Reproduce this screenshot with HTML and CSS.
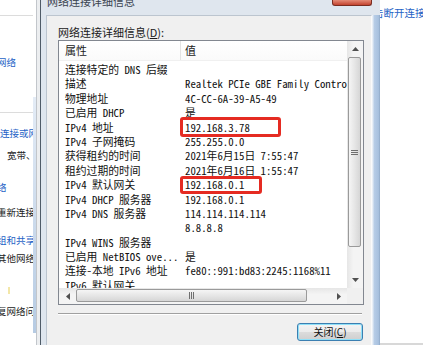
FILE: index.html
```html
<!DOCTYPE html>
<html lang="zh-CN">
<head>
  <meta charset="UTF-8" />
  <title>网络连接详细信息</title>
  <link rel="stylesheet" href="styles.css">
</head>
<body>
<div class="screen">

  <!-- window behind, left side -->
  <div class="bg-left">
    <div class="bg-text">
      <div class="rule rule-1"></div>
      <div class="ln link ln-net">网络</div>
      <div class="rule rule-2"></div>
      <div class="ln link ln-a">连接或网络</div>
      <div class="ln ln-b">宽带、</div>
      <div class="ln link ln-c">络</div>
      <div class="ln ln-d">重新连接</div>
      <div class="ln link ln-e">组和共享</div>
      <div class="ln ln-f">其他网络</div>
      <div class="spark"></div>
      <div class="ln ln-g">复网络问</div>
    </div>
    <div class="bg-bar"></div>
    <div class="bg-edge"></div>
  </div>

  <!-- the dialog -->
  <div class="dialog">
    <div class="titlebar">
      <span class="title">网络连接详细信息</span>
      <span class="close-btn"></span>
    </div>
    <div class="dlg-body">
      <div class="frame-l"></div>
      <div class="client">
        <div class="label">网络连接详细信息(<u>D</u>):</div>

        <div class="listview">
          <div class="lv-content">
            <div class="lv-head">
              <div class="h-k">属性</div>
              <div class="h-v">值</div>
            </div>
            <div class="rows">
              <div class="row"><div class="k">连接特定的 DNS 后缀</div><div class="v"></div></div>
              <div class="row"><div class="k">描述</div><div class="v">Realtek PCIe GBE Family Controller</div></div>
              <div class="row"><div class="k">物理地址</div><div class="v">4C-CC-6A-39-A5-49</div></div>
              <div class="row"><div class="k">已启用 DHCP</div><div class="v">是</div></div>
              <div class="row"><div class="k">IPv4 地址</div><div class="v">192.168.3.78<span class="mark mark-ip"></span></div></div>
              <div class="row"><div class="k">IPv4 子网掩码</div><div class="v">255.255.0.0</div></div>
              <div class="row"><div class="k">获得租约的时间</div><div class="v">2021年6月15日 7:55:47</div></div>
              <div class="row"><div class="k">租约过期的时间</div><div class="v">2021年6月16日 1:55:47</div></div>
              <div class="row"><div class="k">IPv4 默认网关</div><div class="v">192.168.0.1<span class="mark mark-gw"></span></div></div>
              <div class="row"><div class="k">IPv4 DHCP 服务器</div><div class="v">192.168.0.1</div></div>
              <div class="row"><div class="k">IPv4 DNS 服务器</div><div class="v">114.114.114.114</div></div>
              <div class="row"><div class="k"></div><div class="v">8.8.8.8</div></div>
              <div class="row"><div class="k">IPv4 WINS 服务器</div><div class="v"></div></div>
              <div class="row"><div class="k">已启用 NetBIOS ove...</div><div class="v">是</div></div>
              <div class="row"><div class="k">连接-本地 IPv6 地址</div><div class="v">fe80::991:bd83:2245:1168%11</div></div>
              <div class="row"><div class="k">IPv6 默认网关</div><div class="v"></div></div>
            </div>
          </div>

          <div class="vscroll">
            <div class="sb-btn sb-btn-v">
              <svg width="7" height="4" viewBox="0 0 7 4"><polygon points="0,4 3.5,0 7,4" fill="#505050"/></svg>
            </div>
            <div class="thumb thumb-v">
              <svg width="7" height="5" viewBox="0 0 7 5"><path d="M0 0.5H7M0 2.5H7M0 4.5H7" stroke="#6f6f6f" stroke-width="1"/></svg>
            </div>
            <div class="track"></div>
            <div class="sb-btn sb-btn-v">
              <svg width="7" height="4" viewBox="0 0 7 4"><polygon points="0,0 3.5,4 7,0" fill="#505050"/></svg>
            </div>
          </div>

          <div class="hscroll">
            <div class="sb-btn sb-btn-h">
              <svg width="4" height="7" viewBox="0 0 4 7"><polygon points="4,0 0,3.5 4,7" fill="#505050"/></svg>
            </div>
            <div class="thumb thumb-h">
              <svg width="5" height="7" viewBox="0 0 5 7"><path d="M0.5 0V7M2.5 0V7M4.5 0V7" stroke="#6f6f6f" stroke-width="1"/></svg>
            </div>
            <div class="track"></div>
            <div class="sb-btn sb-btn-h">
              <svg width="4" height="7" viewBox="0 0 4 7"><polygon points="0,0 4,3.5 0,7" fill="#505050"/></svg>
            </div>
          </div>

          <div class="sb-corner"></div>
        </div>

        <div class="separator"></div>
        <div class="btn-row">
          <button class="btn-close">关闭(<u>C</u>)</button>
        </div>
      </div>
      <div class="frame-r"></div>
    </div>
  </div>

  <!-- window behind, right side -->
  <div class="bg-right">
    <div class="link cut">击断开连接</div>
  </div>

</div>
</body>
</html>
```

FILE: styles.css
```css
* {
  box-sizing: border-box;
}
body {
  margin: 0;
  width: 423px;
  height: 345px;
  overflow: hidden;
  background: #fff;
  font-family: "Noto Sans CJK SC", "Liberation Sans", sans-serif;
  color: #1a1a1a;
}
.screen {
  display: flex;
  height: 345px;
}

/* ---- background window, left ---- */
.bg-left {
  width: 40px;
  flex-shrink: 0;
  display: flex;
}
.bg-text {
  width: 33px;
  overflow: hidden;
  font-size: 9.5px;
  color: #222;
}
.bg-text .ln {
  height: 14px;
  line-height: 14px;
  white-space: nowrap;
}
.link {
  color: #1f63c6;
}
.rule {
  height: 1px;
  background: #dcdcdc;
}
.rule-1 { margin-top: 15px; }
.ln-net { margin-top: 39px; margin-left: -3px; }
.rule-2 { margin-top: 43px; }
.ln-a { margin-top: 13px; }
.ln-b { margin-top: 8px; padding-left: 7px; }
.ln-c { margin-top: 18px; margin-left: -3px; }
.ln-d { margin-top: 11px; margin-left: -3px; }
.ln-e { margin-top: 14px; margin-left: -3px; }
.ln-f { margin-top: 4px; margin-left: -3px; }
.spark {
  width: 2px;
  height: 7px;
  margin: 22px 0 0 8px;
  background: #f3e7a8;
}
.ln-g { margin-top: 10px; margin-left: -3px; }
.bg-bar {
  width: 3px;
  height: 236px;
  margin-top: 97px;
  background: linear-gradient(#e4ecf6, #b6cbe3);
}
.bg-edge {
  width: 4px;
  background: #eceef0;
  border-left: 1px solid #c2c6cb;
}

/* ---- dialog window ---- */
.dialog {
  width: 340px;
  flex-shrink: 0;
  display: flex;
  flex-direction: column;
  background: #dfe6ee;
  border-left: 1px solid #4f5b67;
}
.titlebar {
  height: 15px;
  display: flex;
  align-items: flex-start;
  padding-left: 6px;
}
.title {
  flex: 1;
  font-size: 11px;
  line-height: 11px;
  margin-top: -4px;
  color: #3a4350;
}
.close-btn {
  width: 40px;
  height: 6px;
  margin-right: 8px;
  background: linear-gradient(#e58b77, #c2432f);
  border: 1px solid #7a2c20;
  border-top: none;
  border-radius: 0 0 3px 3px;
}
.dlg-body {
  flex: 1;
  display: flex;
}
.frame-l {
  width: 5px;
}
.frame-r {
  width: 8px;
  background: linear-gradient(to right, #f5f8fb, #b6cce6 30%, #a8c1df 80%, #8fa9c7);
}
.client {
  width: 326px;
  background: #f0f0f0;
  border-top: 1px solid #bcc5cf;
  border-left: 1px solid #bcc5cf;
  border-right: 1px solid #fbfbfb;
  padding: 9px 7px 0 11px;
}
.label {
  font-size: 11px;
  line-height: 15px;
  height: 15px;
}

/* ---- list view ---- */
.listview {
  width: 306px;
  height: 265px;
  border: 1px solid #828790;
  background: #fff;
  display: grid;
  grid-template-columns: 1fr 16px;
  grid-template-rows: 1fr 16px;
}
.lv-content {
  overflow: hidden;
}
.lv-head {
  height: 20px;
  display: flex;
  font-size: 11px;
  line-height: 19px;
  background: linear-gradient(#fff, #fafafa);
  border-bottom: 1px solid #f0f0f0;
}
.h-k {
  width: 121px;
  padding-left: 6px;
}
.h-v {
  flex: 1;
  padding-left: 4px;
  border-left: 1px solid #e3e3e3;
}
.rows {
  padding-top: 1px;
  font-family: "Noto Sans Mono CJK SC", "Liberation Mono", "Noto Sans CJK SC", monospace;
  font-size: 10.8px;
  color: #111;
}
.row {
  display: flex;
  height: 14.4px;
  line-height: 14px;
  white-space: nowrap;
}
.k {
  width: 121px;
  flex-shrink: 0;
  padding-left: 6px;
  overflow: hidden;
}
.v {
  position: relative;
  padding-left: 5px;
}

/* red annotation boxes */
.mark {
  position: absolute;
  left: 0;
  border: 3px solid #e52b22;
  border-radius: 3px;
}
.mark-ip {
  top: -3px;
  bottom: -3px;
  width: 101px;
}
.mark-gw {
  top: -1px;
  bottom: -2px;
  width: 82px;
}

/* ---- scroll bars ---- */
.vscroll {
  display: flex;
  flex-direction: column;
  background: linear-gradient(to right, #e6e6e6, #f4f4f4 40%, #f4f4f4);
}
.hscroll {
  display: flex;
  background: linear-gradient(#e6e6e6, #f4f4f4 40%, #f4f4f4);
}
.sb-btn {
  display: flex;
  align-items: center;
  justify-content: center;
}
.sb-btn-v {
  height: 16px;
}
.sb-btn-h {
  width: 17px;
}
.track {
  flex: 1;
}
.thumb {
  display: flex;
  align-items: center;
  justify-content: center;
  border: 1px solid #9a9a9a;
  border-radius: 2px;
}
.thumb-v {
  height: 190px;
  margin: 0 2px 0 1px;
  background: linear-gradient(to right, #f5f5f5, #e6e6e6 50%, #d6d6d6);
}
.thumb-h {
  width: 231px;
  margin: 1px 0 2px;
  background: linear-gradient(#f5f5f5, #e6e6e6 50%, #d6d6d6);
}
.sb-corner {
  background: #f0f0f0;
}

/* ---- bottom of dialog ---- */
.separator {
  width: 304px;
  margin-top: 8px;
  border-top: 1px solid #a0a0a0;
  border-bottom: 1px solid #fff;
}
.btn-row {
  display: flex;
  justify-content: flex-end;
  margin-top: 8px;
  padding-right: 1px;
}
.btn-close {
  width: 66px;
  height: 18px;
  padding: 0;
  font-family: "Noto Sans CJK SC", sans-serif;
  font-size: 10px;
  line-height: 14px;
  color: #111;
  border: 1px solid #3c7fb1;
  border-radius: 3px;
  box-shadow: inset 0 0 0 1px #8fe0f8;
  background: linear-gradient(#f4f4f4, #ebebeb 50%, #dcdcdc 50%, #cfcfcf);
}

/* ---- background window, right ---- */
.bg-right {
  flex: 1;
  overflow: hidden;
  background: #fff;
  border-bottom: 2px solid #d8d8d8;
}
.cut {
  margin: 6px 0 0 -7px;
  font-size: 10.5px;
  line-height: 14px;
  white-space: nowrap;
}
```
